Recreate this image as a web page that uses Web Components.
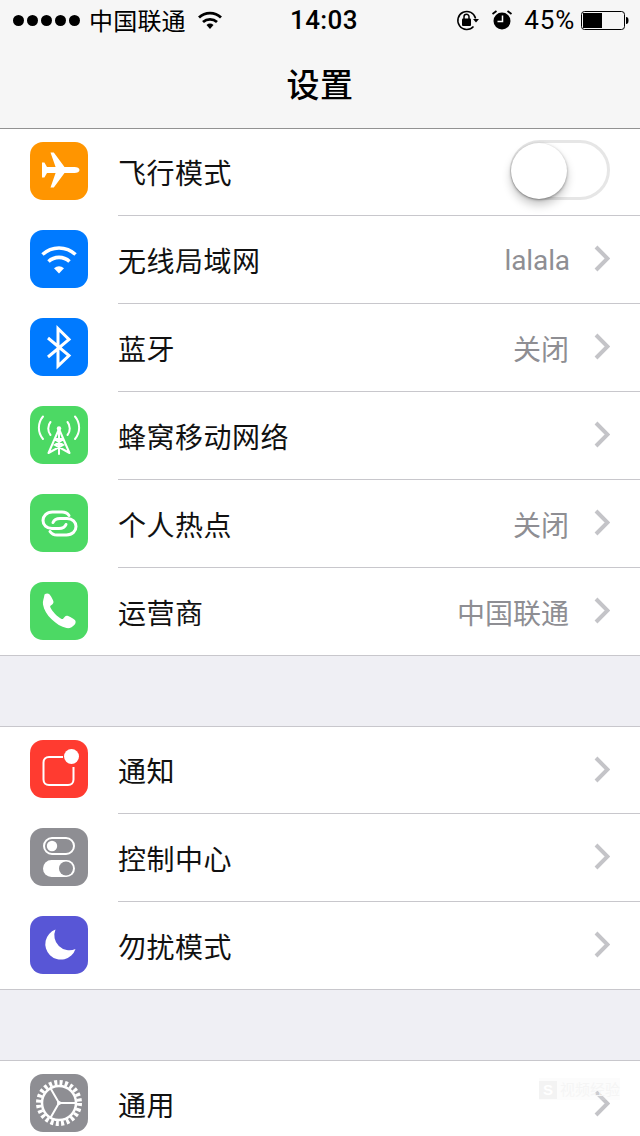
<!DOCTYPE html>
<html lang="zh-CN">
<head>
<meta charset="utf-8">
<title>设置</title>
<style>
  html, body { margin: 0; height: 1136px; overflow: hidden; background: #efeff4; }
  body { font-family: "Noto Sans CJK SC", "Liberation Sans", sans-serif; }
</style>
</head>
<body>
<settings-app>
  <settings-group>
    <settings-row first icon="plane" color="#ff9500" label="飞行模式" toggle></settings-row>
    <settings-row icon="wifi" color="#007aff" label="无线局域网" value="lalala" chevron></settings-row>
    <settings-row icon="bluetooth" color="#007aff" label="蓝牙" value="关闭" chevron></settings-row>
    <settings-row icon="cell" color="#4cd964" label="蜂窝移动网络" chevron></settings-row>
    <settings-row icon="hotspot" color="#4cd964" label="个人热点" value="关闭" chevron></settings-row>
    <settings-row last icon="phone" color="#4cd964" label="运营商" value="中国联通" chevron></settings-row>
  </settings-group>
  <settings-group>
    <settings-row first icon="notify" color="#ff3b30" label="通知" chevron></settings-row>
    <settings-row icon="control" color="#8e8e93" label="控制中心" chevron></settings-row>
    <settings-row last icon="moon" color="#5856d6" label="勿扰模式" chevron></settings-row>
  </settings-group>
  <settings-group>
    <settings-row first icon="gear" color="#8e8e93" label="通用" chevron></settings-row>
  </settings-group>
</settings-app>

<script>
const ICONS = {
  plane: `<path fill="#fff" d="M49.500 28c0-1.700-2.200-3-5-3H34.500L23.800 10.600H20.500L25.600 25H17l-2.600-4.600H12v7.600 7.600h2.400L17 31h8.600L20.500 45.400h3.300L34.500 31H44.500c2.800 0 5-1.300 5-3z"/>`,
  wifi: `<g fill="none" stroke="#fff" stroke-width="3.600"><path d="M12.500 24.500a24 24 0 0 1 33 0"/><path d="M18.500 31.500a15.500 15.500 0 0 1 21 0"/></g><path fill="#fff" d="M24 38.200a8 8 0 0 1 10 0l-5 5.300z"/>`,
  bluetooth: `<path fill="none" stroke="#fff" stroke-width="3" d="M18 20l21 17.500-11 10.500V10.500l11 11L18 39"/>`,
  cell: `<g fill="none" stroke="#fff" stroke-width="2" stroke-linecap="round"><path d="M13 10.500c-5.500 6.500-5.500 16 0 22.500"/><path d="M45 10.500c5.500 6.500 5.500 16 0 22.500"/><path d="M20.500 16c-3 3.500-3 9.500 0 13"/><path d="M37.500 16c3 3.500 3 9.500 0 13"/><path d="M29 23v25M29 23l-10.500 24M29 23l10.500 24M24.500 33l8.500 6-14.500 8M33.500 33l-8.500 6 14.500 8M24.500 33h9"/></g><circle cx="29" cy="22.500" r="2.200" fill="#fff"/>`,
  hotspot: `<g fill="none" stroke="#fff" stroke-width="3" stroke-linecap="round"><path d="M39 21.500c-1.500-2.300-4-3.500-7-3.500H22.500c-6 0-9.500 4-9.500 8.500s3.500 8 9 8h1.500"/><path d="M20 37.500c1.500 2.300 4 3.500 7 3.500h9.500c6 0 9.500-4 9.500-8.500s-3.500-8-9-8h-1.500"/><path d="M35.500 24.500H30c-3.500 0-6 1.500-7 4"/><path d="M23.500 34.500H29c3.500 0 6-1.500 7-4"/></g>`,
  phone: `<path fill="#fff" d="M14.500 12.600c1.300-1.200 3.300-1.500 4.600-.6 1.100.8 3.600 5.200 4.200 7 .5 1.400-.1 2.600-1.100 3.400l-1.700 1.400c-.4.400-.5.900-.2 1.500 1.100 2.200 2.900 4.700 4.800 6.700 2 2 4.300 3.800 6.500 4.900.6.300 1.100.2 1.500-.2l1.500-1.700c.9-1 2-1.500 3.400-1 1.800.6 6.300 3.100 7.100 4.200.9 1.300.6 3.200-.6 4.500-2 2.300-4.700 3.900-8 3.300-5.200-1-10.400-4.200-14.900-8.700-4.500-4.500-7.700-9.700-8.600-14.900-.6-3.200 1-5.800 1.500-9.800z"/>`,
  notify: `<path fill="none" stroke="#fff" stroke-width="2" d="M33 17H19c-3.300 0-5.500 2.200-5.500 5.500v17c0 3.300 2.200 5.500 5.500 5.500h19c3.300 0 5.500-2.200 5.500-5.500V27"/><circle cx="41.500" cy="16.500" r="7.500" fill="#fff"/>`,
  control: `<rect x="14" y="10" width="30" height="16" rx="8" fill="none" stroke="#fff" stroke-width="2"/><circle cx="22" cy="18" r="5.200" fill="#fff"/><rect x="13" y="32" width="32" height="17" rx="8.500" fill="#fff"/><circle cx="36" cy="40.500" r="7" fill="#8e8e93"/>`,
  moon: `<path fill="#fff" d="M25.500 13.500A15.500 15.500 0 1 0 45.500 33 15 15 0 0 1 25.500 13.500z"/>`,
  gear: `<circle cx="29" cy="29" r="20.500" fill="none" stroke="#fff" stroke-width="5" stroke-dasharray="3 2.366"/><circle cx="29" cy="29" r="17" fill="none" stroke="#fff" stroke-width="2.500"/><g stroke="#fff" stroke-width="2"><path d="M29 29H46M29 29L20.500 14.300M29 29L20.500 43.700"/></g><circle cx="29" cy="29" r="2" fill="#fff"/>`
};

const statusTemplate = document.createElement('template');
statusTemplate.innerHTML = `
  <style>
    :host { display: flex; align-items: center; height: 40px; box-sizing: border-box; padding: 0 11px 0 13px; color: #000; position: relative; }
    .dots { display: flex; gap: 3px; margin-right: 9px; }
    .dots i { width: 11px; height: 11px; border-radius: 50%; background: #000; }
    .carrier { font-size: 24px; line-height: 40px; letter-spacing: .2px; }
    .wifi { margin-left: 12px; }
    .time { position: absolute; left: 290px; top: 0; font: 500 26px/40px Roboto, "Liberation Sans", sans-serif; letter-spacing: .4px; }
    .right { margin-left: auto; display: flex; align-items: center; }
    .pct { font: 400 26px/40px Roboto, "Liberation Sans", sans-serif; margin: 0 6px 0 11px; letter-spacing: .8px; }
    .battery { margin-top: 2px; }
    svg { display: block; }
  </style>
  <div class="dots"><i></i><i></i><i></i><i></i><i></i></div>
  <span class="carrier">中国联通</span>
  <svg class="wifi" width="24" height="18" viewBox="0 0 24 18"><g fill="none" stroke="#000" stroke-width="2.800"><path d="M1 6.500a16 16 0 0 1 22 0"/><path d="M5 11a10.500 10.500 0 0 1 14 0"/></g><path d="M8.500 14a5.500 5.500 0 0 1 7 0L12 18z"/></svg>
  <span class="time">14:03</span>
  <div class="right">
    <svg width="24" height="22" viewBox="0 0 24 22" style="margin-right:11px"><path fill="none" stroke="#000" stroke-width="1.500" d="M19.600 9.500A9 9 0 1 0 17.500 17.500"/><path d="M17 10h6l-3 3.500z"/><rect x="6" y="9.500" width="9" height="7.500" rx="1"/><path fill="none" stroke="#000" stroke-width="1.500" d="M8 10V7.800a2.500 2.500 0 0 1 5 0V10"/></svg>
    <svg width="22" height="22" viewBox="0 0 22 22"><circle cx="11" cy="12" r="8.500"/><path fill="none" stroke="#000" stroke-width="1.800" d="M1.500 5l4-3M20.500 5l-4-3"/><path fill="none" stroke="#fff" stroke-width="1.500" d="M11.500 6.500V12.500H6.500"/></svg>
    <span class="pct">45%</span>
    <svg class="battery" width="48" height="20" viewBox="0 0 48 20"><rect x=".5" y=".5" width="43" height="18" rx="3" fill="none" stroke="#000"/><rect x="2" y="2" width="19" height="15" fill="#000"/><path d="M45 6c2 0 2.500 1.500 2.500 3.500S47 13 45 13z"/></svg>
  </div>
`;

class StatusBar extends HTMLElement {
  constructor() {
    super();
    this.attachShadow({ mode: 'open' });
    this.shadowRoot.appendChild(statusTemplate.content.cloneNode(true));
  }
}

const appTemplate = document.createElement('template');
appTemplate.innerHTML = `
  <style>
    :host { display: block; }
    header { background: #f6f6f6; border-bottom: 1px solid #929292; }
    h1 { margin: 0; height: 88px; display: flex; align-items: center; justify-content: center; font-size: 33px; font-weight: 500; letter-spacing: .5px; padding-bottom: 3px; box-sizing: border-box; color: #000; }
    .list { display: flex; flex-direction: column; gap: 70px; }
    .watermark { position: absolute; left: 539px; top: 1078px; height: 22px; background: rgba(240,240,240,.2); color: #f5f5f5; font-size: 15px; line-height: 22px; white-space: nowrap; }
    .watermark b { display: inline-block; width: 18px; height: 18px; background: #f3f3f3; color: #fff; text-align: center; font: 700 15px/18px "Liberation Sans", sans-serif; margin-right: 3px; }
  </style>
  <header>
    <status-bar></status-bar>
    <h1>设置</h1>
  </header>
  <div class="list"><slot></slot></div>
  <div class="watermark"><b>S</b>视频经验</div>
`;

class SettingsApp extends HTMLElement {
  constructor() {
    super();
    this.attachShadow({ mode: 'open' });
    this.shadowRoot.appendChild(appTemplate.content.cloneNode(true));
  }
}

const groupTemplate = document.createElement('template');
groupTemplate.innerHTML = `
  <style>
    :host { display: block; background: #fff; }
    :host(:not(:first-child)) { border-top: 1px solid #c8c7cc; }
  </style>
  <slot></slot>
`;

class SettingsGroup extends HTMLElement {
  constructor() {
    super();
    this.attachShadow({ mode: 'open' });
    this.shadowRoot.appendChild(groupTemplate.content.cloneNode(true));
  }
}

const toggleTemplate = document.createElement('template');
toggleTemplate.innerHTML = `
  <style>
    :host { display: block; width: 100px; height: 60px; box-sizing: border-box; border: 3px solid #e6e6e6; border-radius: 30px; position: relative; }
    .knob { position: absolute; left: -2px; top: 0; width: 56px; height: 56px; border-radius: 50%; background: #fff; box-shadow: 0 6px 10px rgba(0,0,0,.22), 0 1px 3px rgba(0,0,0,.35); }
  </style>
  <div class="knob"></div>
`;

class ToggleSwitch extends HTMLElement {
  constructor() {
    super();
    this.attachShadow({ mode: 'open' });
    this.shadowRoot.appendChild(toggleTemplate.content.cloneNode(true));
  }
}

const rowTemplate = document.createElement('template');
rowTemplate.innerHTML = `
  <style>
    :host { display: flex; height: 88px; box-sizing: border-box; padding-left: 30px; background: #fff; }
    :host([first]) { height: 87px; }
    :host([last]) { border-bottom: 1px solid #c8c7cc; }
    .icon { width: 58px; height: 58px; border-radius: 13px; margin-top: 14px; flex: none; }
    :host([first]) .icon { margin-top: 13px; }
    .icon svg { display: block; }
    .body { flex: 1; margin-left: 30px; display: flex; align-items: center; border-bottom: 1px solid #c8c7cc; padding-right: 30px; }
    :host([last]) .body { border-bottom: 0; }
    .label { flex: 1; font-size: 28px; letter-spacing: .5px; line-height: 40px; color: #111; }
    .value { font-size: 28px; line-height: 40px; color: #8e8e93; }
    .value.latin { font-family: Roboto, "Liberation Sans", sans-serif; margin-right: -1px; padding-top: 3px; letter-spacing: -.1px; }
    .chevron { margin: -2px 0 0 25px; display: block; }
    toggle-switch { margin-top: -4px; }
  </style>
  <div class="icon"></div>
  <div class="body">
    <span class="label"></span>
  </div>
`;

class SettingsRow extends HTMLElement {
  constructor() {
    super();
    this.attachShadow({ mode: 'open' });
    this.shadowRoot.appendChild(rowTemplate.content.cloneNode(true));
  }

  connectedCallback() {
    const icon = this.shadowRoot.querySelector('.icon');
    icon.style.background = this.getAttribute('color');
    icon.innerHTML = `<svg width="58" height="58" viewBox="0 0 58 58">${ICONS[this.getAttribute('icon')]}</svg>`;
    this.shadowRoot.querySelector('.label').textContent = this.getAttribute('label');

    const body = this.shadowRoot.querySelector('.body');
    if (this.hasAttribute('value')) {
      const value = document.createElement('span');
      value.className = 'value';
      value.textContent = this.getAttribute('value');
      if (/^[a-z]+$/.test(value.textContent)) value.classList.add('latin');
      body.appendChild(value);
    }
    if (this.hasAttribute('chevron')) {
      body.insertAdjacentHTML('beforeend', '<svg class="chevron" width="16" height="27" viewBox="0 0 16 27"><path fill="none" stroke="#c4c4c8" stroke-width="4" d="M2 2l11.500 11.500L2 25"/></svg>');
    }
    if (this.hasAttribute('toggle')) {
      body.appendChild(document.createElement('toggle-switch'));
    }
  }
}

customElements.define('status-bar', StatusBar);
customElements.define('toggle-switch', ToggleSwitch);
customElements.define('settings-row', SettingsRow);
customElements.define('settings-group', SettingsGroup);
customElements.define('settings-app', SettingsApp);
</script>
</body>
</html>
